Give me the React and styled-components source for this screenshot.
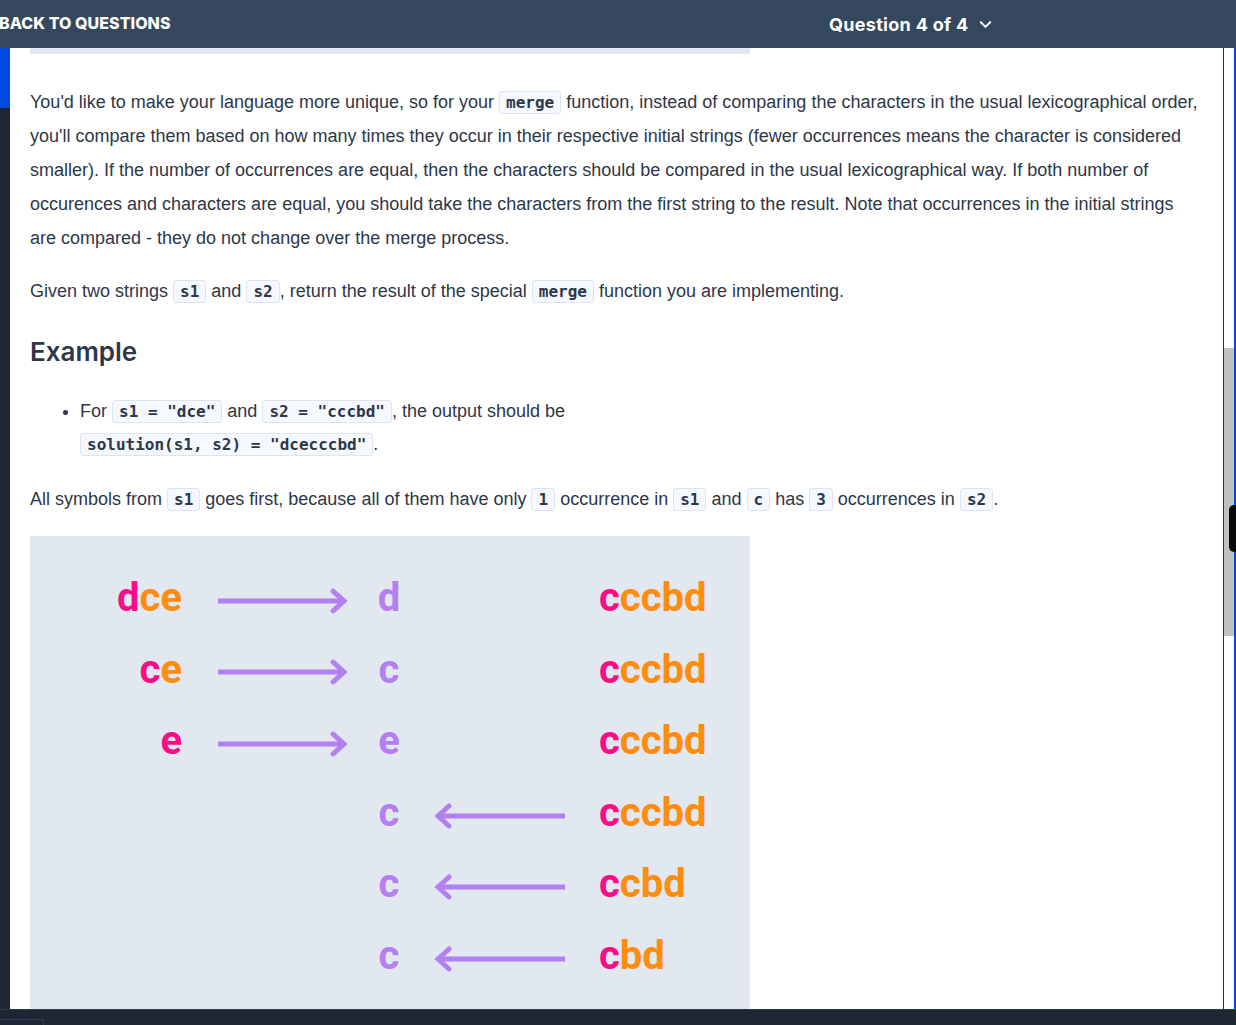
import React from 'react';
import styled, { createGlobalStyle } from 'styled-components';
import { ChevronDown } from 'lucide-react';

const PINK = '#fd0c88';
const ORANGE = '#ff8c0c';
const PURPLE = '#b47ff0';

const rows = [
  { left: ['d', 'ce'], mid: 'd', dir: 'right', right: ['c', 'ccbd'] },
  { left: ['c', 'e'], mid: 'c', dir: 'right', right: ['c', 'ccbd'] },
  { left: ['e', ''], mid: 'e', dir: 'right', right: ['c', 'ccbd'] },
  { left: null, mid: 'c', dir: 'left', right: ['c', 'ccbd'] },
  { left: null, mid: 'c', dir: 'left', right: ['c', 'cbd'] },
  { left: null, mid: 'c', dir: 'left', right: ['c', 'bd'] },
  { left: null, mid: 'b', dir: 'left', right: ['b', 'd'] },
  { left: null, mid: 'd', dir: 'left', right: ['d', ''] },
];

function Arrow({ dir }) {
  const flip = dir === 'left';
  return (
    <ArrowSvg width="132" height="26" viewBox="0 0 132 26" $flip={flip}>
      <line x1="1" y1="13" x2="128" y2="13" stroke={PURPLE} strokeWidth="5" />
      <polyline
        points="117,3 128,13 117,23"
        fill="none"
        stroke={PURPLE}
        strokeWidth="5"
        strokeLinecap="round"
        strokeLinejoin="miter"
      />
    </ArrowSvg>
  );
}

function Pair({ parts }) {
  if (!parts) return <span />;
  return (
    <span>
      <Ch $color={PINK}>{parts[0]}</Ch>
      <Ch $color={ORANGE}>{parts[1]}</Ch>
    </span>
  );
}

export default function App() {
  return (
    <Page>
      <GlobalStyle />
      <Header>
        <BackLink>Back to questions</BackLink>
        <QuestionPicker>
          Question 4 of 4
          <ChevronDown size={19} strokeWidth={2.6} />
        </QuestionPicker>
      </Header>

      <Workspace>
        <Rail />
        <Panel>
          <ImageTail />
          <Para>
            You'd like to make your language more unique, so for your <Code>merge</Code> function,
            instead of comparing the characters in the usual lexicographical order, you'll compare
            them based on how many times they occur in their respective initial strings (fewer
            occurrences means the character is considered smaller). If the number of occurrences are
            equal, then the characters should be compared in the usual lexicographical way. If both
            number of occurences and characters are equal, you should take the characters from the
            first string to the result. Note that occurrences in the initial strings are compared -
            they do not change over the merge process.
          </Para>
          <Para>
            Given two strings <Code>s1</Code> and <Code>s2</Code>, return the result of the special{' '}
            <Code>merge</Code> function you are implementing.
          </Para>

          <Heading>Example</Heading>

          <List>
            <li>
              For <Code>s1 = "dce"</Code> and <Code>s2 = "cccbd"</Code>, the output should be
              <br />
              <Code>solution(s1, s2) = "dcecccbd"</Code>.
            </li>
          </List>

          <Para>
            All symbols from <Code>s1</Code> goes first, because all of them have only <Code>1</Code>{' '}
            occurrence in <Code>s1</Code> and <Code>c</Code> has <Code>3</Code> occurrences in{' '}
            <Code>s2</Code>.
          </Para>

          <Diagram>
            {rows.map((r, i) => (
              <DiagramRow key={i}>
                <LeftCell>
                  <Pair parts={r.left} />
                </LeftCell>
                <ArrowCell>{r.dir === 'right' && <Arrow dir="right" />}</ArrowCell>
                <MidCell>{r.mid}</MidCell>
                <ArrowCell>{r.dir === 'left' && <Arrow dir="left" />}</ArrowCell>
                <RightCell>
                  <Pair parts={r.right} />
                </RightCell>
              </DiagramRow>
            ))}
          </Diagram>
        </Panel>
        <Scrollbar>
          <Thumb />
        </Scrollbar>
        <EdgeLine />
        <DragHandle />
      </Workspace>

      <StatusBar>
        <StatusTab />
      </StatusBar>
    </Page>
  );
}

const GlobalStyle = createGlobalStyle`
html, body {
  margin: 0;
  padding: 0;
}
body {
  background: #1e2533;
  overflow: hidden;
  font-family: "Liberation Sans", Arial, sans-serif;
}
`;

const Page = styled.div`
height: 1025px;
display: flex;
flex-direction: column;`;

const Header = styled.header`
flex: none;
height: 48px;
background: #34475d;
display: flex;
align-items: center;
color: #fff;`;

const BackLink = styled.a`
width: 830px;
margin-left: -1px;
margin-top: -3px;
font-family: Inter, "Open Sans", sans-serif;
font-weight: 800;
font-size: 16px;
letter-spacing: 0.05px;
text-transform: uppercase;`;

const QuestionPicker = styled.button`
display: flex;
align-items: center;
gap: 7px;
padding: 0;
border: 0;
background: none;
color: #fff;
font-family: Inter, "Open Sans", sans-serif;
font-weight: 700;
font-size: 18px;
letter-spacing: 0.3px;
svg {
  margin-top: 1px;
}`;

const Workspace = styled.div`
position: relative;
flex: none;
height: 961px;
display: flex;`;

const Rail = styled.div`
flex: none;
width: 10px;
background: #1f2633;
&::before {
  content: "";
  display: block;
  height: 60px;
  background: #0247e0;
}`;

const Panel = styled.main`
flex: none;
width: 1193px;
padding: 0 0 0 20px;
background: #fff;
border-right: 1px solid #283142;
overflow: hidden;
color: #2d3748;`;

const ImageTail = styled.div`
width: 720px;
height: 6px;
background: #e2e8f0;`;

const Para = styled.p`
margin: 31px 0 19px;
width: 1172px;
font-size: 18px;
line-height: 34px;
& + & {
  margin-top: 0;
}`;

const Code = styled.code`
display: inline-block;
line-height: 19px;
padding: 1px 6px;
font-family: "DejaVu Sans Mono", "Liberation Mono", monospace;
font-weight: 700;
font-size: 16px;
color: #2d3748;
background: #f5f8ff;
border: 1px solid #dce4f2;
border-radius: 3px;`;

const Heading = styled.h2`
margin: 28px 0 27px;
font-family: Inter, "Open Sans", sans-serif;
font-weight: 600;
font-size: 26px;
line-height: 32px;
color: #2d3748;`;

const List = styled.ul`
margin: 0;
padding-left: 50px;
font-size: 18px;
line-height: 33px;
& + ${Para} {
  margin-top: 21px;
}`;

const Diagram = styled.div`
width: 720px;
margin-top: 20px;
padding-top: 26px;
background: #e2e8f0;
font-family: Roboto, "Noto Sans", sans-serif;
font-weight: 700;
font-size: 40px;`;

const DiagramRow = styled.div`
display: grid;
grid-template-columns: 187px 131px 86px 132px 1fr;
align-items: center;
height: 71.6px;
line-height: 71.6px;`;

const LeftCell = styled.div`
text-align: right;
padding-right: 35px;`;

const ArrowCell = styled.div`
display: flex;
align-items: center;
height: 100%;
margin-top: 6px;`;

const MidCell = styled.div`
text-align: center;
padding-right: 4px;
color: ${PURPLE};`;

const RightCell = styled.div`
padding-left: 33px;`;

const Ch = styled.span`
color: ${(p) => p.$color};`;

const ArrowSvg = styled.svg`
display: block;
transform: ${(p) => (p.$flip ? 'scaleX(-1)' : 'none')};`;

const Scrollbar = styled.div`
position: relative;
flex: none;
width: 10px;
background: #fff;`;

const Thumb = styled.div`
position: absolute;
left: 0;
right: 0;
top: 300px;
height: 288px;
background: #c1c1c1;`;

const EdgeLine = styled.div`
flex: none;
width: 2px;
background: #0247e0;`;

const DragHandle = styled.div`
position: absolute;
right: 0;
top: 457px;
width: 7px;
height: 47px;
background: #0a0a0a;
border-radius: 5px 0 0 5px;`;

const StatusBar = styled.footer`
flex: 1;
display: flex;
align-items: flex-end;
border-top: 1px solid #2b3a50;
background: #1e2533;`;

const StatusTab = styled.div`
width: 43px;
height: 5px;
border: 1px solid #2e3d55;
border-bottom: 0;
border-left: 0;`;
